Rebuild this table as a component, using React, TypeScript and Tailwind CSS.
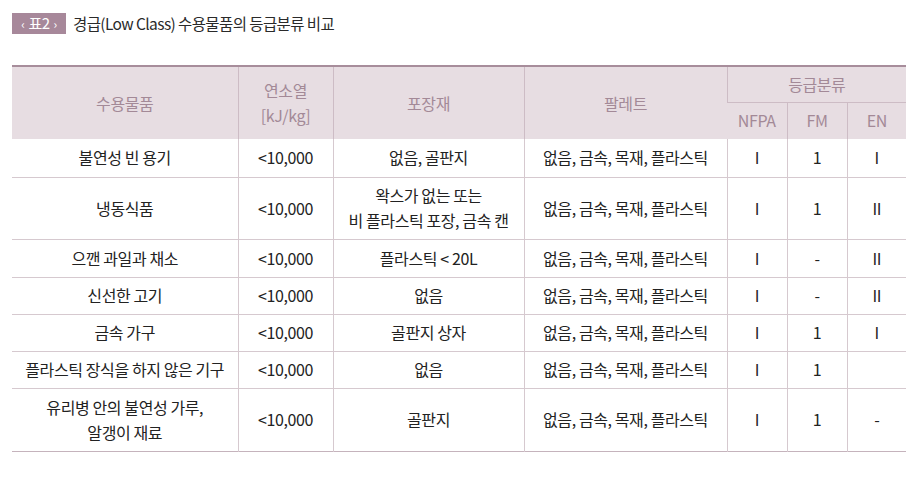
import React from 'react';

const ROWS = [
  { item: ['불연성 빈 용기'], heat: '<10,000', pack: ['없음, 골판지'], pallet: '없음, 금속, 목재, 플라스틱', nfpa: 'I', fm: '1', en: 'I', h: 'h-[38px]' },
  { item: ['냉동식품'], heat: '<10,000', pack: ['왁스가 없는 또는', '비 플라스틱 포장, 금속 캔'], pallet: '없음, 금속, 목재, 플라스틱', nfpa: 'I', fm: '1', en: 'II', h: 'h-[62px]' },
  { item: ['으깬 과일과 채소'], heat: '<10,000', pack: ['플라스틱 < 20L'], pallet: '없음, 금속, 목재, 플라스틱', nfpa: 'I', fm: '-', en: 'II', h: 'h-[38px]' },
  { item: ['신선한 고기'], heat: '<10,000', pack: ['없음'], pallet: '없음, 금속, 목재, 플라스틱', nfpa: 'I', fm: '-', en: 'II', h: 'h-[37px]' },
  { item: ['금속 가구'], heat: '<10,000', pack: ['골판지 상자'], pallet: '없음, 금속, 목재, 플라스틱', nfpa: 'I', fm: '1', en: 'I', h: 'h-[37px]' },
  { item: ['플라스틱 장식을 하지 않은 기구'], heat: '<10,000', pack: ['없음'], pallet: '없음, 금속, 목재, 플라스틱', nfpa: 'I', fm: '1', en: '', h: 'h-[37px]' },
  { item: ['유리병 안의 불연성 가루,', '알갱이 재료'], heat: '<10,000', pack: ['골판지'], pallet: '없음, 금속, 목재, 플라스틱', nfpa: 'I', fm: '1', en: '-', h: 'h-[63px]' },
];

function Lines({ lines }: { lines: string[] }) {
  return (
    <>
      {lines.map((l, i) => (
        <div key={i}>{l}</div>
      ))}
    </>
  );
}

export default function App() {
  const th = 'border-l border-[#cdbcc5] first:border-l-0 font-normal text-[#a38997]';
  const td = 'border-l border-[#d6c9cf] first:border-l-0 text-center';

  return (
    <div
      className="w-[920px] h-[480px] bg-white text-[#222] pt-[13px]"
      style={{ fontFamily: '"Noto Sans CJK KR", "Noto Sans", sans-serif' }}
    >
      {/* caption */}
      <div className="flex items-center gap-[7px] pl-[12px] h-[21px]">
        <span className="flex items-center gap-[4px] h-[21px] w-[54px] justify-center bg-[#a7889a] text-white text-[15px] tracking-[-0.5px]">
          <span className="text-[12px]">‹</span>
          <span>표2</span>
          <span className="text-[12px]">›</span>
        </span>
        <span className="text-[15.5px] tracking-[-0.6px] text-[#2a2a2a]">
          경급(Low Class) 수용물품의 등급분류 비교
        </span>
      </div>

      <table className="ml-[12px] mt-[31px] w-[894px] table-fixed border-collapse text-[16px] tracking-[-0.4px] leading-[25px]">
        <colgroup>
          <col className="w-[226px]" />
          <col className="w-[95px]" />
          <col className="w-[191px]" />
          <col className="w-[203px]" />
          <col className="w-[60px]" />
          <col className="w-[60px]" />
          <col className="w-[59px]" />
        </colgroup>
        <thead className="bg-[#e7dde2] border-t-[2px] border-[#a78d9b]">
          <tr className="h-[36px]">
            <th rowSpan={2} className={th}>수용물품</th>
            <th rowSpan={2} className={th}>
              <div>연소열</div>
              <div>[kJ/kg]</div>
            </th>
            <th rowSpan={2} className={th}>포장재</th>
            <th rowSpan={2} className={th}>팔레트</th>
            <th colSpan={3} className={`${th} border-b`}>등급분류</th>
          </tr>
          <tr className="h-[37px]">
            <th className={th}>NFPA</th>
            <th className={th}>FM</th>
            <th className={th}>EN</th>
          </tr>
        </thead>
        <tbody>
          {ROWS.map((r, i) => (
            <tr key={i} className={`${r.h} border-b border-[#d6c9cf] last:border-[#c5b3bc]`}>
              <td className={td}><Lines lines={r.item} /></td>
              <td className={td}>{r.heat}</td>
              <td className={td}><Lines lines={r.pack} /></td>
              <td className={td}>{r.pallet}</td>
              <td className={td}>{r.nfpa}</td>
              <td className={td}>{r.fm}</td>
              <td className={td}>{r.en}</td>
            </tr>
          ))}
        </tbody>
      </table>
    </div>
  );
}
